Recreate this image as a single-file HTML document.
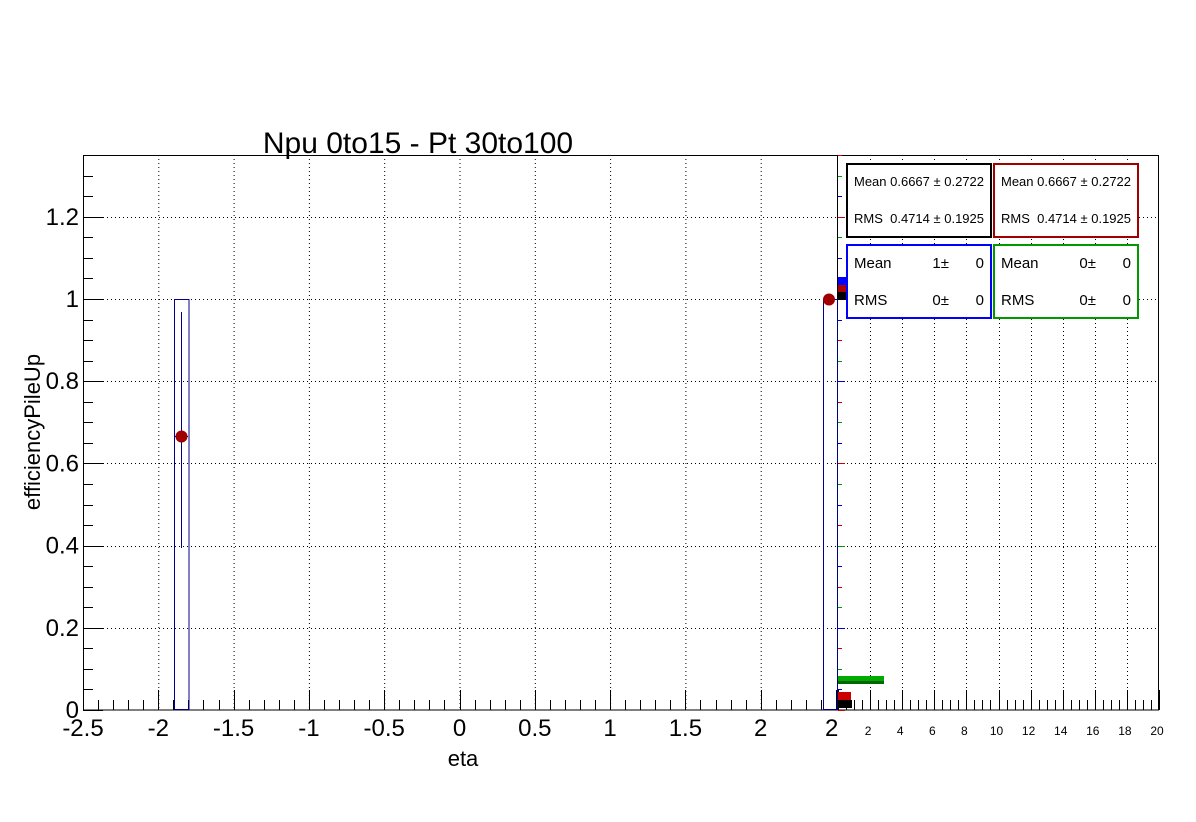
<!DOCTYPE html>
<html><head><meta charset="utf-8"><style>
html,body{margin:0;padding:0;background:#fff;width:1196px;height:822px;overflow:hidden}
svg{display:block;font-family:"Liberation Sans",sans-serif}
</style></head><body>
<svg id="s" width="1196" height="822" xmlns="http://www.w3.org/2000/svg"></svg>
<script>
const s=document.getElementById('s');let h='';
const X=e=>459.5+150.6*e, Y=v=>710-411*v;
const L=(x1,y1,x2,y2,c='#000',w=1,d='')=>h+=`<line x1="${x1}" y1="${y1}" x2="${x2}" y2="${y2}" stroke="${c}" stroke-width="${w}" ${d?`stroke-dasharray="${d}"`:''}/>`;
const T=(x,y,t,sz,a='middle',c='#000')=>h+=`<text x="${x}" y="${y}" font-size="${sz}" text-anchor="${a}" fill="${c}">${t}</text>`;
for(let i=-4;i<=4;i++){L(X(i*0.5)+.5,155,X(i*0.5)+.5,710,'#000',1,'1,3');}
for(let v=0.2;v<1.35;v+=0.2){const y=Math.round(Y(v))+.5;L(83,y,1159,y,'#000',1,'1,3');}
for(let k=2;k<20;k+=2){const x=Math.round(838+16.05*k)+.5;L(x,155,x,710,'#000',1,'1,3');}
h+=`<rect x="83.5" y="155.5" width="1075" height="554.5" fill="none" stroke="#000"/>`;
L(837.5,155,837.5,710);
for(let i=-25;i<=25;i++){const x=Math.round(X(i/10))+.5;const maj=i%5==0;L(x,710,x,maj?690:700);}
for(let i=-5;i<=4;i++){T(X(i*0.5),736,(i*0.5).toString(),24);}
T(X(2.5)-11,736,'2',24,'start');
for(let i=0;i<=27;i++){const y=Math.round(Y(i*0.05))+.5;const maj=i%4==0;L(83,y,maj?103:93,y);}
['0','0.2','0.4','0.6','0.8','1','1.2'].forEach((t,i)=>T(79,Y(i*0.2)+8,t,24,'end'));
for(let k=0;k<=40;k++){const x=Math.round(838+16.05*k/2)+.5;const maj=k%4==0;L(x,710,x,maj?690:700);}
for(let k=2;k<=20;k+=2)T(836+16.05*k,735,k,12);
for(let i=0;i<=27;i++){const y=Math.round(Y(i*0.05))+.5;const c=['#c00','#00c','#090'][i%3];L(838,y,i%4==0?845:842,y,c);}
h+=`<rect x="174.5" y="299.5" width="14.5" height="410" fill="none" stroke="#00008b"/>`;
h+=`<rect x="823.5" y="299.5" width="14" height="410" fill="none" stroke="#00008b"/>`;
L(181.5,312,181.5,548,'#00008b');L(175,436.5,188,436.5,'#00008b');
h+=`<circle cx="181.5" cy="436.5" r="6" fill="#a00000"/>`;
h+=`<circle cx="829" cy="299.5" r="6" fill="#a00000"/>`;
h+=`<rect x="838" y="676" width="46" height="8" fill="#0a0"/><rect x="838" y="681" width="46" height="3" fill="#060"/>`;
h+=`<rect x="838" y="692" width="13" height="8" fill="#c00"/><rect x="838" y="700" width="14" height="8" fill="#000"/>`;
h+=`<rect x="838" y="277" width="8" height="8" fill="#00f"/><rect x="838" y="285" width="8" height="7" fill="#a00"/><rect x="838" y="292" width="8" height="8" fill="#000"/>`;
const box=(x,y,c)=>h+=`<rect x="${x}" y="${y}" width="144" height="73" fill="#fff" stroke="${c}" stroke-width="2"/>`;
box(847,164,'#000');box(994,164,'#a00000');box(847,245,'#00f');box(994,245,'#090');
[[847],[994]].forEach(([x])=>{T(x+7,186,'Mean 0.6667 ± 0.2722',13,'start');T(x+7,223,'RMS&#160;&#160;0.4714 ± 0.1925',13,'start');});
[[847,'1'],[994,'0']].forEach(([x,m])=>{T(x+7,268,'Mean',15,'start');T(x+7,305,'RMS',15,'start');
 T(x+102,268,m+'±',15,'end');T(x+137,268,'0',15,'end');T(x+102,305,'0±',15,'end');T(x+137,305,'0',15,'end');});
T(418,153,'Npu 0to15 - Pt 30to100',30);
T(463,766,'eta',22);
h+=`<text x="0" y="0" font-size="22" text-anchor="middle" transform="translate(40,432) rotate(-90)">efficiencyPileUp</text>`;
s.innerHTML=h;
</script>
</body></html>
